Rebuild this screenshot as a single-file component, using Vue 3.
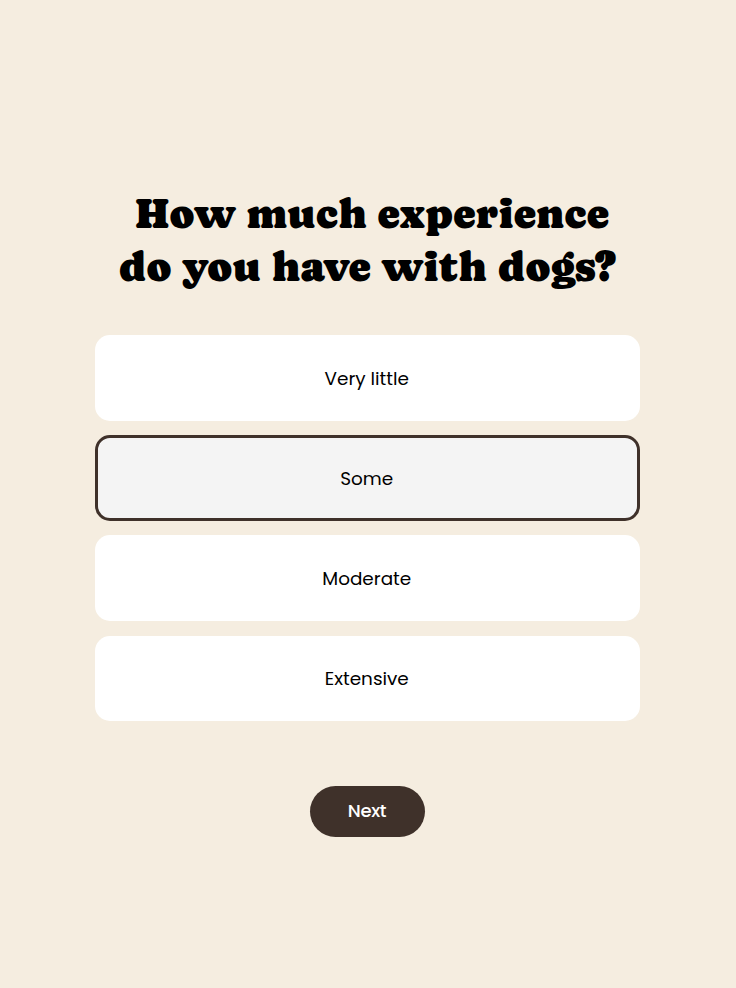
<script setup>
import { ref } from 'vue'

const options = ['Very little', 'Some', 'Moderate', 'Extensive']
const selected = ref('Some')
</script>

<template>
  <main class="quiz">
    <h1 class="title">
      <span class="line first">How much experience</span>
      <span class="line">do you have with dogs?</span>
    </h1>
    <div class="options">
      <button
        v-for="option in options"
        :key="option"
        type="button"
        :class="['option', { selected: option === selected }]"
        @click="selected = option"
      >
        <span>{{ option }}</span>
      </button>
    </div>
    <button type="button" class="next"><span>Next</span></button>
  </main>
</template>

<style>
body {
  margin: 0;
  background: #f5ede0;
}
</style>

<style scoped>
.quiz {
  box-sizing: border-box;
  height: 988px;
  padding: 187px 96px 0 94.5px;
  display: flex;
  flex-direction: column;
  align-items: center;
  background: #f5ede0;
}
.title {
  margin: 0;
  height: 148.3px;
  font: 400 42.35px/53px "Caprasimo", "Cooper Black", "DejaVu Serif", serif;
  color: #000;
  display: flex;
  flex-direction: column;
  align-items: center;
}
.line {
  white-space: nowrap;
}
.first {
  padding-left: 10px;
}
.options {
  width: 100%;
  display: grid;
  grid-auto-rows: 85.5px;
  gap: 14.6px;
}
.option {
  box-sizing: border-box;
  border: 0;
  border-radius: 15px;
  background: #fff;
  color: #000;
  padding: 1.5px 1px 0 0;
  font: 400 18.4px/28px "Poppins", "Inter", sans-serif;
}
.option.selected {
  border: 3px solid #3f312a;
  background: #f4f4f4;
}
.next {
  margin-top: 64.7px;
  width: 115px;
  height: 51.5px;
  border: 0;
  border-radius: 26px;
  background: #3f312a;
  color: #fff;
  padding: 0 0.6px 1px 0;
  font: 500 18px/28px "Poppins", "Inter", sans-serif;
  letter-spacing: -0.4px;
}
</style>
